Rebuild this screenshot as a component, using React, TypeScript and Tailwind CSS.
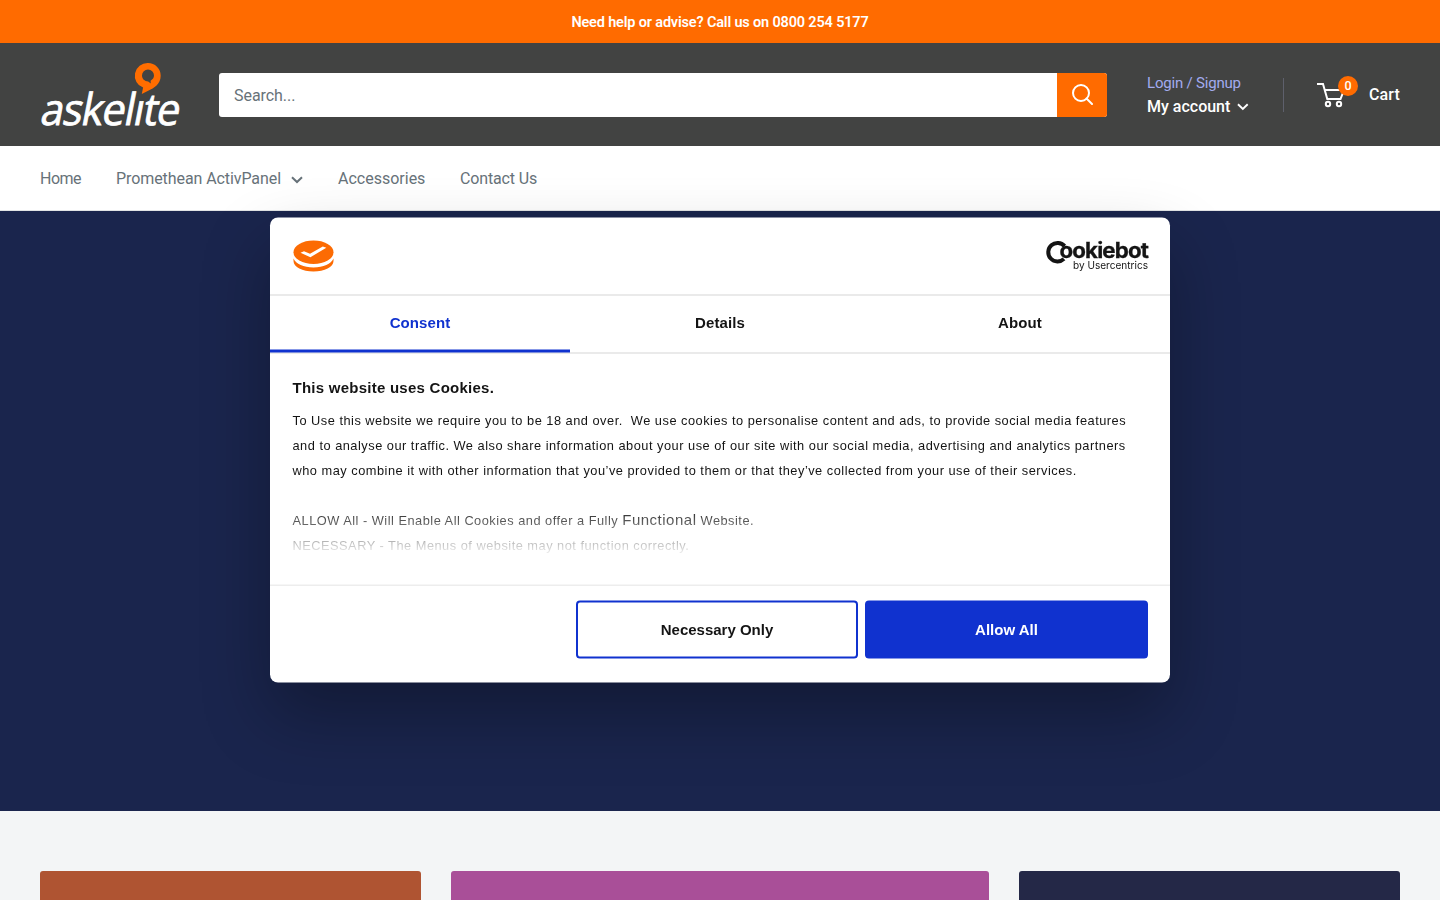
import React from 'react';

const Chevron = ({ className }: { className: string }) => (
  <svg className={className} width="12" height="8" viewBox="0 0 12 8" fill="none" stroke="currentColor" strokeWidth="2">
    <path d="M1 1.2 6 6l5-4.8" />
  </svg>
);

const Logo = () => (
  <svg width="139" height="64" viewBox="0 0 139 64" className="block shrink-0 overflow-visible">
    <text
      x="-1"
      y="0"
      transform="translate(0 62) skewX(-11)"
      fill="#fff"
      stroke="#fff"
      strokeWidth="0.8"
      fontSize="44"
      letterSpacing="-1.2"
      fontFamily="'Open Sans', sans-serif"
      textLength="138"
      lengthAdjust="spacingAndGlyphs"
    >
      askelıte
    </text>
    <path
      fill="#ff6d00"
      fillRule="evenodd"
      d="M108 0a12.7 12.7 0 0 1 12.7 12.7c0 8.500-7 12.300-12 14.800-2.300 1.200-4.700 2.500-6.900 3.500l1.300-6.400A12.700 12.700 0 0 1 108 0Zm0 6.600a6 6 0 0 0-6 6c0 3.500 2.500 5.700 6.200 5.900l2.600 2.100-.2-2.900c2.200-1.200 3.400-2.800 3.400-5.100a6 6 0 0 0-6-6Z"
    />
  </svg>
);

const CookieIcon = () => (
  <svg width="42" height="34" viewBox="0 0 42 34" className="block">
    <path fill="#fc6b03" d="M1.500 19c2.500 5.500 10 9 20 9s17.500-3.500 20-9v2.500c0 6-9 10.500-20 10.500s-20-4.500-20-10.500Z" />
    <ellipse cx="21.500" cy="12.700" rx="20" ry="11.700" fill="#fc6b03" />
    <path d="m8.500 13.300 3.500-1.600 6 2.500L30.800 7l3.500 1.200L18.400 17.800Z" fill="#fff" />
  </svg>
);

const CookiebotLogo = () => (
  <svg width="104" height="34" viewBox="0 0 104 34" className="block overflow-visible">
    <path d="M19.600 6.600A9.300 9.300 0 1 0 19 19.400" fill="none" stroke="#141414" strokeWidth="4" />
    <text x="14.500" y="18.300" fill="#141414" stroke="#141414" strokeWidth="0.300" fontSize="21" fontWeight="700" letterSpacing="-0.800" fontFamily="Inter, sans-serif" textLength="88.500" lengthAdjust="spacingAndGlyphs">
      ookiebot
    </text>
    <text x="28" y="29.500" fill="#141414" fontSize="10.500" fontFamily="Inter, sans-serif" textLength="75" lengthAdjust="spacingAndGlyphs">
      by Usercentrics
    </text>
  </svg>
);

export default function App() {
  return (
    <div className="h-[900px] w-full overflow-hidden bg-[#f3f5f6] font-['Roboto',sans-serif]">
      <div className="flex h-[43px] items-center justify-center bg-[#ff6b00] pt-[2px] text-[14.5px] font-semibold text-white">
        <span className="tracking-[-0.17px]">Need help or advise? Call us on 0800 254 5177</span>
      </div>

      <header className="flex h-[103px] items-center bg-[#424342] px-10">
        <div className="pb-[3px] pt-[3px]">
          <Logo />
        </div>
        <div className="ml-10 flex h-11 w-[888px] overflow-hidden rounded-[3px] bg-white">
          <div className="flex flex-1 items-center px-[15px] pt-[2px] text-base text-[#677279]">
            <span className="tracking-[-0.05px]">Search...</span>
          </div>
          <div className="flex w-[50px] items-center justify-center bg-[#ff6b00]">
            <svg width="21" height="21" viewBox="0 0 21 21" fill="none" stroke="#fff" strokeWidth="2">
              <circle cx="9" cy="9" r="8" />
              <path d="m14.500 14.500 5.500 5.500" strokeLinecap="round" />
            </svg>
          </div>
        </div>
        <div className="ml-10 w-[102px] whitespace-nowrap">
          <div className="h-[23px] text-[15px] leading-[22px] tracking-[-0.2px] text-[#a3abef]">Login / Signup</div>
          <div className="flex h-[23px] items-center text-base font-medium leading-[23px] text-white">
            <span>My account</span>
            <Chevron className="ml-[7px] mt-[2px]" />
          </div>
        </div>
        <div className="ml-[34px] h-[34px] w-px bg-[#5e606c]" />
        <div className="relative ml-[33px] h-[30px] w-[42px]">
          <svg width="28" height="26" viewBox="0 0 28 26" fill="none" stroke="#fff" strokeWidth="2" className="mt-[2px]">
            <path d="M0 2h6l4.300 15h13.200l3.500-9H8" />
            <circle cx="11" cy="22" r="2.200" />
            <circle cx="22" cy="22" r="2.200" />
          </svg>
          <span className="absolute left-[21px] top-[-4px] flex h-5 w-5 items-center justify-center rounded-full bg-[#ff6b00] pt-px text-[12.5px] font-medium text-white">
            0
          </span>
        </div>
        <span className="ml-[10px] pt-px text-base font-medium tracking-[0.1px] text-white">Cart</span>
      </header>

      <nav className="flex h-[65px] items-center border-b border-[#e1e3e4] bg-white px-10 pt-[2px] text-base text-[#677279]">
        <span className="w-[76px] tracking-[-0.5px]">Home</span>
        <span className="flex w-[222px] items-center">
          <span className="tracking-[-0.08px]">Promethean ActivPanel</span>
          <Chevron className="ml-[10px] mt-[2px]" />
        </span>
        <span className="w-[122px]">Accessories</span>
        <span className="tracking-[-0.15px]">Contact Us</span>
      </nav>

      <div className="h-[600px] bg-[#1a254d]" />

      <div className="flex gap-[30px] px-10 pt-[60px]">
        <div className="h-[200px] w-[381px] rounded-[3px] bg-[#af5432]" />
        <div className="h-[200px] w-[538px] rounded-[3px] bg-[#a94f98]" />
        <div className="h-[200px] w-[381px] rounded-[3px] bg-[#242847]" />
      </div>

      <div className="fixed left-1/2 top-1/2 flex h-[465px] w-[900px] -translate-x-1/2 -translate-y-1/2 flex-col overflow-hidden rounded-lg bg-white font-['Liberation_Sans',Arial,sans-serif] text-[#141414] shadow-[0_32px_68px_rgba(0,0,0,0.3)]">
        <div className="flex h-[78px] shrink-0 items-center justify-between border-b border-[#d6d6d6] pl-[22px] pr-[21px]">
          <CookieIcon />
          <CookiebotLogo />
        </div>
        <div className="flex h-[58px] shrink-0 border-b border-[#d6d6d6] text-[15px] font-bold tracking-[0.1px]">
          <div className="flex w-[300px] items-center justify-center border-b-[3px] border-[#1032cf] text-[#1032cf]">Consent</div>
          <div className="flex w-[300px] items-center justify-center pb-[3px]">Details</div>
          <div className="flex w-[300px] items-center justify-center pb-[3px]">About</div>
        </div>
        <div className="relative h-[231.500px] shrink-0 whitespace-nowrap border-b border-[#dcdcdc] px-[22.5px] pt-[21px]">
          <h2 className="text-[15px] font-bold leading-[26px] tracking-[0.25px]">This website uses Cookies.</h2>
          <div className="mt-[6.500px] text-[12.8px] leading-[25px] tracking-[0.5px]">
            <p>To Use this website we require you to be 18 and over.&nbsp; We use cookies to personalise content and ads, to provide social media features</p>
            <p>and to analyse our traffic. We also share information about your use of our site with our social media, advertising and analytics partners</p>
            <p>who may combine it with other information that you’ve provided to them or that they’ve collected from your use of their services.</p>
            <p className="mt-[25.500px] h-[24.500px]">
              ALLOW All - Will Enable All Cookies and offer a Fully <span className="text-[15px] leading-none">Functional</span> Website.
            </p>
            <p>NECESSARY - The Menus of website may not function correctly.</p>
          </div>
          <div className="absolute bottom-0 left-0 h-[78px] w-full bg-linear-to-b from-transparent to-white to-65%" />
        </div>
        <div className="flex flex-1 justify-end gap-[7px] pr-[22px] pt-[15.500px] text-[15px] font-bold">
          <button className="h-[58px] w-[282px] rounded-[4px] border-2 border-[#1032cf] bg-white">Necessary Only</button>
          <button className="h-[58px] w-[283px] rounded-[4px] bg-[#1032cf] text-white">Allow All</button>
        </div>
      </div>
    </div>
  );
}
